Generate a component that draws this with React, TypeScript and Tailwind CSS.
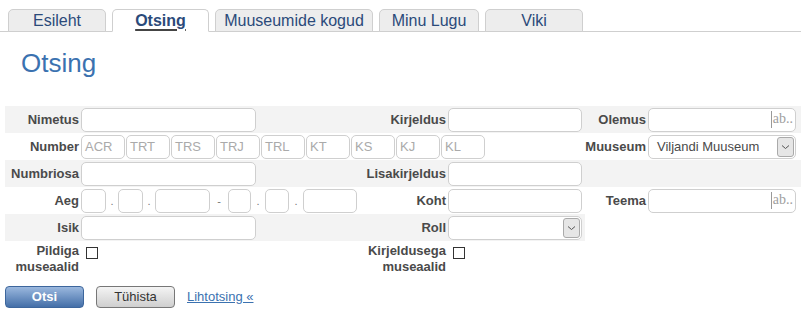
import React from 'react';

/**
 * OTSING — detailne otsinguvorm
 */

const TABS = [
  { label: 'Esileht', w: 'w-[98px]' },
  { label: 'Otsing', w: 'w-[97px]', active: true },
  { label: 'Muuseumide kogud', w: 'w-[158px]' },
  { label: 'Minu Lugu', w: 'w-[100px]' },
  { label: 'Viki', w: 'w-[98px]' },
];

const NUMBER_PARTS = ['ACR', 'TRT', 'TRS', 'TRJ', 'TRL', 'KT', 'KS', 'KJ', 'KL'];

const inputCls = 'h-[24px] border border-[#cfcfcf] rounded-[5px] bg-white';

const Label = ({ children, className = '' }: { children: React.ReactNode; className?: string }) => (
  <div className={`text-right font-bold text-[13px] text-[#4a4a4a] leading-[16px] pr-[2px] ${className}`}>{children}</div>
);

const Box = ({ w }: { w: string }) => <div className={`${inputCls} ${w} shrink-0`} />;

const AbInput = () => (
  <div className={`${inputCls} w-[148px] flex items-center justify-end pr-[2px]`}>
    <div className="h-[17px] border-l border-[#999] pl-[1px] text-[14px] text-[#a0a0a0] leading-[16px]" style={{ fontFamily: '"Liberation Serif", serif' }}>
      ab..
    </div>
  </div>
);

const Select = ({ w, value }: { w: string; value?: string }) => (
  <div className={`${inputCls} ${w} flex items-center justify-between pl-[8px] pr-[1px]`}>
    <span className="text-[13px] text-[#4a4a4a]">{value}</span>
    <div className="w-[17px] h-[20px] bg-[#e6e6e6] border border-[#aaa] rounded-[3px] flex items-center justify-center">
      <svg width="9" height="6" viewBox="0 0 9 6"><path d="M1 1.5 L4.5 4.5 L8 1.5" fill="none" stroke="#555" strokeWidth="1" /></svg>
    </div>
  </div>
);

const Sep = ({ c = '.', w }: { c?: string; w: string }) => (
  <span className={`${w} shrink-0 text-center text-[11px] text-[#777] self-end pb-[3px]`}>{c}</span>
);

export default function App() {
  return (
    <div className="w-[801px] h-[315px] bg-white overflow-hidden" style={{ fontFamily: '"Liberation Sans", Arial, sans-serif' }}>
      {/* tabs */}
      <div className="flex items-end h-[32px] border-b border-[#cfcfcf] pl-[8px] gap-[6px]">
        {TABS.map((t) => (
          <div
            key={t.label}
            className={`${t.w} h-[23px] -mb-px rounded-t-[5px] border border-[#cfcfcf] flex items-center justify-center text-[16px] text-[#2b4a7a] ${
              t.active ? 'bg-white border-b-white font-bold underline decoration-[#444] decoration-2 underline-offset-[3px]' : 'bg-[#ededed]'
            }`}
          >
            {t.label}
          </div>
        ))}
      </div>

      <h1 className="text-[26px] text-[#3b72b0] pl-[21px] pt-[16px] leading-[30px]">Otsing</h1>

      {/* form */}
      <div className="mt-[28px] pl-[5px] flex flex-col">
        {/* row 1 */}
        <div className="flex h-[27px] items-center bg-[#f3f3f3]">
          <div className="w-[580px] flex items-center">
            <Label className="w-[76px]">Nimetus</Label>
            <Box w="w-[175px]" />
            <Label className="w-[192px]">Kirjeldus</Label>
            <Box w="w-[134px]" />
          </div>
          <Label className="w-[63px]">Olemus</Label>
          <AbInput />
        </div>

        {/* row 2 */}
        <div className="flex h-[27px] items-center">
          <div className="w-[580px] flex items-center">
            <Label className="w-[76px]">Number</Label>
            <div className="flex gap-[1px]">
              {NUMBER_PARTS.map((p) => (
                <div key={p} className={`${inputCls} w-[44px] flex items-center pl-[3px] text-[13px] text-[#aaa]`}>{p}</div>
              ))}
            </div>
          </div>
          <Label className="w-[63px]">Muuseum</Label>
          <Select w="w-[148px]" value="Viljandi Muuseum" />
        </div>

        {/* row 3 */}
        <div className="flex h-[27px] items-center bg-[#f3f3f3]">
          <div className="w-[580px] flex items-center">
            <Label className="w-[76px]">Numbriosa</Label>
            <Box w="w-[175px]" />
            <Label className="w-[192px]">Lisakirjeldus</Label>
            <Box w="w-[134px]" />
          </div>
        </div>

        {/* row 4 */}
        <div className="flex h-[27px] items-center">
          <div className="w-[580px] flex items-center">
            <Label className="w-[76px]">Aeg</Label>
            <div className="w-[276px] flex h-[24px] shrink-0">
              <Box w="w-[25px]" />
              <Sep w="w-[12px]" />
              <Box w="w-[25px]" />
              <Sep w="w-[12px]" />
              <Box w="w-[55px]" />
              <Sep w="w-[18px]" c="-" />
              <Box w="w-[23px]" />
              <Sep w="w-[14px]" />
              <Box w="w-[24px]" />
              <Sep w="w-[14px]" />
              <Box w="w-[54px]" />
            </div>
            <Label className="w-[91px]">Koht</Label>
            <Box w="w-[134px]" />
          </div>
          <Label className="w-[63px]">Teema</Label>
          <AbInput />
        </div>

        {/* row 5 */}
        <div className="flex h-[27px] items-center">
          <div className="w-[580px] flex items-center bg-[#f3f3f3] h-full">
            <Label className="w-[76px]">Isik</Label>
            <Box w="w-[175px]" />
            <Label className="w-[192px]">Roll</Label>
            <Select w="w-[134px]" />
          </div>
        </div>

        {/* row 6 */}
        <div className="flex h-[31px] items-start pt-[2px]">
          <Label className="w-[76px]">Pildiga<br />museaalid</Label>
          <div className="w-[12px] h-[12px] border border-[#333] mt-[4px] ml-[5px]" />
          <Label className="w-[350px]">Kirjeldusega<br />museaalid</Label>
          <div className="w-[12px] h-[12px] border border-[#333] mt-[4px] ml-[5px]" />
        </div>

        {/* buttons */}
        <div className="flex items-center mt-[14px] gap-[12px]">
          <div className="w-[79px] h-[22px] rounded-[4px] border border-[#3d669c] bg-gradient-to-b from-[#9bb8de] to-[#446fa8] text-white font-bold text-[13px] flex items-center justify-center">
            Otsi
          </div>
          <div className="w-[79px] h-[22px] rounded-[4px] border border-[#777] bg-gradient-to-b from-[#f4f4f4] to-[#cfcfcf] text-[#333] text-[13px] flex items-center justify-center">
            Tühista
          </div>
          <span className="text-[13px] text-[#3b72b0] underline">Lihtotsing «</span>
        </div>
      </div>
    </div>
  );
}
